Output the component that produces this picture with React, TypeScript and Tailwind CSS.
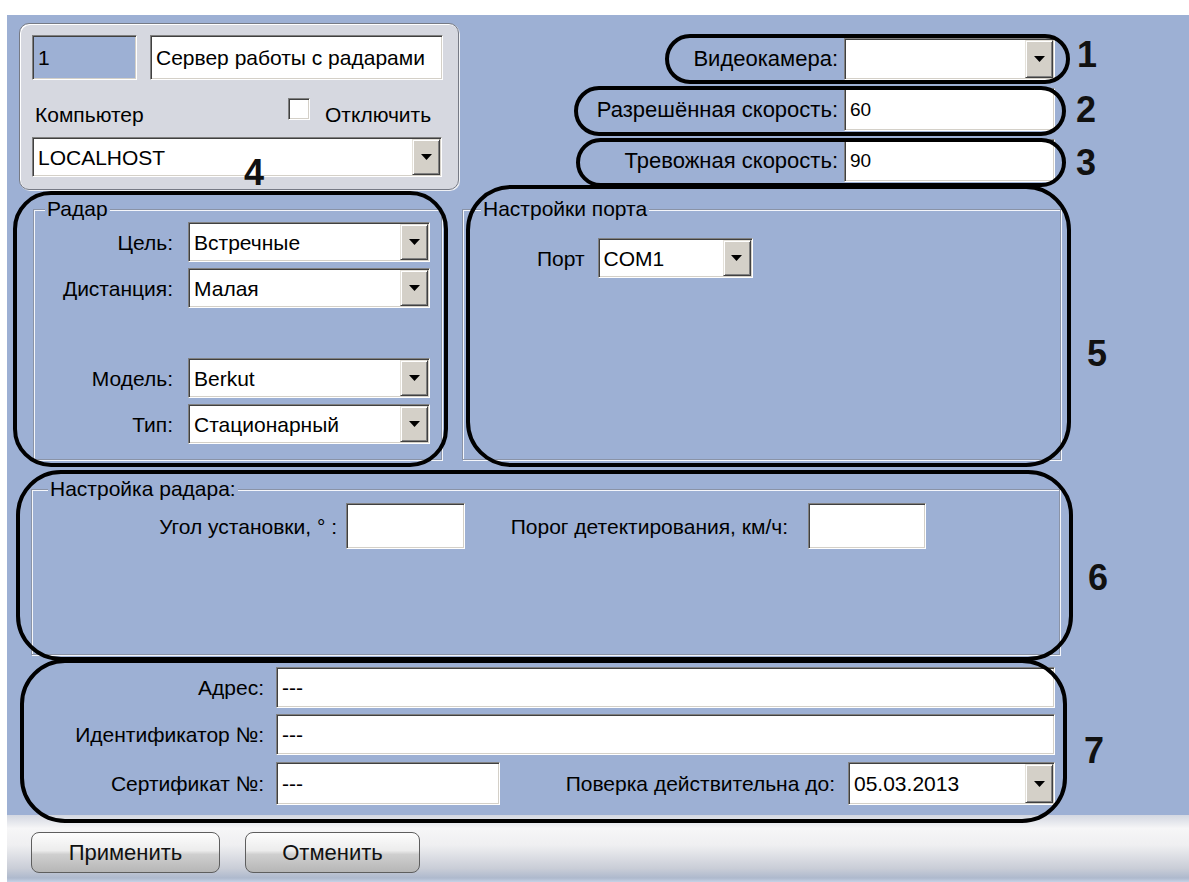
import React from 'react';

function Arrow() {
  return (
    <div className="flex h-full w-[28px] shrink-0 items-center justify-center border border-t-[#e4e1da] border-l-[#e4e1da] border-b-[#404040] border-r-[#404040] bg-[#d4d0c8] shadow-[inset_1px_1px_0_#ffffff,inset_-1px_-1px_0_#808080]">
      <svg width="11" height="6" viewBox="0 0 11 6">
        <path d="M0 0h11L5.5 6z" fill="#000" />
      </svg>
    </div>
  );
}

interface BoxProps {
  className?: string;
  text?: string;
  combo?: boolean;
}

function Box({ className = '', text = '', combo = false }: BoxProps) {
  return (
    <div
      className={`flex shrink-0 items-stretch border border-t-[#808080] border-l-[#808080] border-b-white border-r-white p-[1px] shadow-[inset_1px_1px_0_#404040,inset_-1px_-1px_0_#d4d0c8] ${className}`}
    >
      <div className="flex flex-1 items-center overflow-hidden whitespace-nowrap pl-[4px]">{text}</div>
      {combo && <Arrow />}
    </div>
  );
}

function Oval({ className }: { className: string }) {
  return <div className={`pointer-events-none absolute border-[4px] border-black ${className}`} />;
}

function Num({ n, className }: { n: string; className: string }) {
  return (
    <span className={`pointer-events-none absolute text-[36px] font-bold leading-[36px] text-[#111] ${className}`}>{n}</span>
  );
}

export default function App() {
  return (
    <div className="relative h-[882px] w-[1189px] overflow-hidden bg-white font-['Liberation_Sans',Arial,sans-serif] text-[21px] leading-none text-black">
      <div className="ml-[7px] mt-[15px] h-[800px] w-[1182px] bg-[#9db0d4] pt-[8px]">
        {/* object header + speeds */}
        <div className="flex">
          <div className="ml-[12px] h-[167px] w-[440px] rounded-[10px] border border-[#767a85] bg-[#d6d8e0] px-[12px] pt-[11px] shadow-[inset_1px_1px_0_#ffffff,1px_1px_0_#eef0f5]">
            <div className="flex gap-[13px]">
              <Box className="h-[45px] w-[105px] bg-[#9db0d4]" text="1" />
              <Box className="h-[45px] w-[293px] bg-white" text="Сервер работы с радарами" />
            </div>
            <div className="flex h-[57px] items-center justify-between pl-[3px] pr-[13px]">
              <span className="pt-[12px]">Компьютер</span>
              <div className="flex w-[145px] items-center gap-[15px]">
                <div className="h-[22px] w-[22px] shrink-0 border border-t-[#808080] border-l-[#808080] border-b-white border-r-white bg-white shadow-[inset_1px_1px_0_#404040,inset_-1px_-1px_0_#d4d0c8]" />
                <span className="pt-[12px]">Отключить</span>
              </div>
            </div>
            <Box className="h-[40px] w-[410px] bg-white" text="LOCALHOST" combo />
          </div>

          <div className="ml-auto mr-[134px] mt-[15px] flex flex-col items-end gap-[8px] text-[22px]">
            <div className="flex items-center gap-[6px]">
              <span>Видеокамера:</span>
              <Box className="h-[42px] w-[211px] bg-white" combo />
            </div>
            <div className="flex items-center gap-[6px]">
              <span>Разрешённая скорость:</span>
              <Box className="h-[43px] w-[211px] bg-white text-[19px]" text="60" />
            </div>
            <div className="flex items-center gap-[6px]">
              <span>Тревожная скорость:</span>
              <Box className="h-[43px] w-[211px] bg-white text-[19px]" text="90" />
            </div>
          </div>
        </div>

        {/* radar + port */}
        <div className="mt-[9px] flex">
          <fieldset className="ml-[26px] h-[261px] w-[409px] border border-[#8a93a6] shadow-[inset_1px_1px_0_#f4f6fb,1px_1px_0_#f4f6fb]">
            <legend className="ml-[11px] bg-[#9db0d4] px-[2px] leading-[20px]">Радар</legend>
            <div className="flex flex-col pt-[3px]">
              <div className="flex items-center gap-[15px]">
                <span className="w-[139px] text-right">Цель:</span>
                <Box className="h-[40px] w-[242px] bg-white" text="Встречные" combo />
              </div>
              <div className="mt-[6px] flex items-center gap-[15px]">
                <span className="w-[139px] text-right">Дистанция:</span>
                <Box className="h-[40px] w-[242px] bg-white" text="Малая" combo />
              </div>
              <div className="mt-[50px] flex items-center gap-[15px]">
                <span className="w-[139px] text-right">Модель:</span>
                <Box className="h-[40px] w-[242px] bg-white" text="Berkut" combo />
              </div>
              <div className="mt-[6px] flex items-center gap-[15px]">
                <span className="w-[139px] text-right">Тип:</span>
                <Box className="h-[40px] w-[242px] bg-white" text="Стационарный" combo />
              </div>
            </div>
          </fieldset>

          <fieldset className="ml-[20px] h-[261px] w-[599px] border border-[#8a93a6] shadow-[inset_1px_1px_0_#f4f6fb,1px_1px_0_#f4f6fb]">
            <legend className="ml-[18px] bg-[#9db0d4] px-[2px] leading-[20px]">Настройки порта</legend>
            <div className="flex items-center pl-[74px] pt-[19px]">
              <span>Порт</span>
              <Box className="ml-[13px] h-[40px] w-[155px] bg-white" text="COM1" combo />
            </div>
          </fieldset>
        </div>

        {/* radar setup */}
        <fieldset className="ml-[24px] mt-[19px] h-[176px] w-[1029px] border border-[#8a93a6] shadow-[inset_1px_1px_0_#f4f6fb,1px_1px_0_#f4f6fb]">
          <legend className="ml-[16px] bg-[#9db0d4] px-[2px] leading-[20px]">Настройка радара:</legend>
          <div className="flex items-center pt-[4px]">
            <span className="w-[305px] text-right">Угол установки, ° :</span>
            <Box className="ml-[9px] h-[46px] w-[119px] bg-white" />
            <span className="w-[323px] text-right">Порог детектирования, км/ч:</span>
            <Box className="ml-[20px] h-[46px] w-[118px] bg-white" />
          </div>
        </fieldset>

        {/* certificate */}
        <div className="mt-[12px] flex flex-col">
          <div className="flex items-center">
            <span className="w-[257px] text-right">Адрес:</span>
            <Box className="ml-[12px] h-[41px] w-[779px] bg-white" text="---" />
          </div>
          <div className="mt-[6px] flex items-center">
            <span className="w-[257px] text-right">Идентификатор №:</span>
            <Box className="ml-[12px] h-[41px] w-[779px] bg-white" text="---" />
          </div>
          <div className="mt-[7px] flex items-center">
            <span className="w-[257px] text-right">Сертификат №:</span>
            <Box className="ml-[12px] h-[43px] w-[224px] bg-white" text="---" />
            <span className="w-[335px] text-right">Поверка действительна до:</span>
            <Box className="ml-[13px] h-[43px] w-[207px] bg-white" text="05.03.2013" combo />
          </div>
        </div>
      </div>

      {/* button bar */}
      <div className="ml-[7px] flex h-[67px] w-[1182px] gap-[25px] bg-[linear-gradient(180deg,#d3d7e1_0%,#f6f6f7_20%,#efeff1_45%,#c9cdd7_80%,#aeb9cd_94%,#c6d2e6_100%)] pl-[24px] pt-[17px]">
        <button className="flex h-[41px] w-[189px] items-center justify-center rounded-[8px] border border-[#5e5e5e] bg-[linear-gradient(180deg,#fdfdfd_0%,#ececec_45%,#cfcfcf_55%,#b6b6b6_100%)] text-[22px] text-[#111]">
          Применить
        </button>
        <button className="flex h-[41px] w-[175px] items-center justify-center rounded-[8px] border border-[#5e5e5e] bg-[linear-gradient(180deg,#fdfdfd_0%,#ececec_45%,#cfcfcf_55%,#b6b6b6_100%)] text-[22px] text-[#111]">
          Отменить
        </button>
      </div>

      {/* annotations */}
      <Oval className="left-[665px] top-[34px] h-[50px] w-[405px] rounded-full" />
      <Oval className="left-[574px] top-[86px] h-[50px] w-[492px] rounded-full" />
      <Oval className="left-[576px] top-[138px] h-[49px] w-[490px] rounded-full" />
      <Oval className="left-[13px] top-[191px] h-[276px] w-[435px] rounded-[38px]" />
      <Oval className="left-[466px] top-[185px] h-[282px] w-[605px] rounded-[45px]" />
      <Oval className="left-[16px] top-[470px] h-[191px] w-[1057px] rounded-[45px]" />
      <Oval className="left-[20px] top-[659px] h-[164px] w-[1047px] rounded-[45px]" />

      <Num n="1" className="left-[1077px] top-[37px]" />
      <Num n="2" className="left-[1076px] top-[92px]" />
      <Num n="3" className="left-[1076px] top-[145px]" />
      <Num n="4" className="left-[244px] top-[155px]" />
      <Num n="5" className="left-[1087px] top-[336px]" />
      <Num n="6" className="left-[1088px] top-[560px]" />
      <Num n="7" className="left-[1084px] top-[733px]" />
    </div>
  );
}
